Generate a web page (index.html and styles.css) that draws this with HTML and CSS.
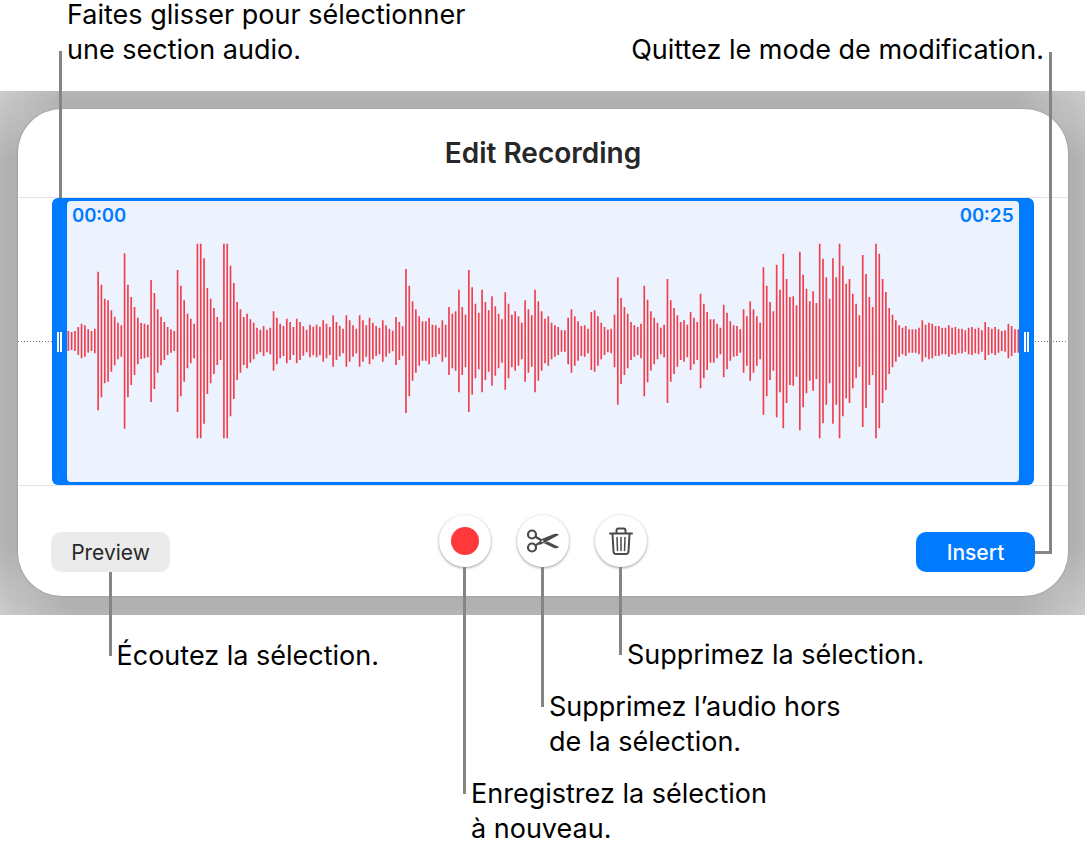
FILE: index.html
```html
<!DOCTYPE html>
<html lang="fr">
<head>
  <meta charset="utf-8">
  <title>Edit Recording</title>
  <link rel="stylesheet" href="styles.css">
</head>
<body>
  <div class="captions">
    <p>Faites glisser pour sélectionner<br>une section audio.</p>
    <p>Quittez le mode de modification.</p>
  </div>

  <main class="stage">
    <div class="editor">
      <h1>Edit Recording</h1>

      <div class="track">
        <div class="selection">
          <span class="leader-up"></span>
          <button class="handle handle-left" aria-label="Start"></button>
          <div class="times">
            <span>00:00</span>
            <span>00:25</span>
          </div>
          <svg class="wave" viewBox="0 0 2856 588" preserveAspectRatio="none">
            <path id="wave"></path>
          </svg>
          <button class="handle handle-right" aria-label="End"></button>
        </div>
      </div>

      <div class="controls">
        <div class="control side">
          <button class="btn">Preview</button>
          <p class="callout drop-preview">Écoutez la sélection.</p>
        </div>

        <div class="tools">
          <div class="control">
            <button class="round" aria-label="Record"><span class="dot"></span></button>
            <p class="callout drop-record">Enregistrez la sélection<br>à nouveau.</p>
          </div>
          <div class="control">
            <button class="round" aria-label="Crop">
              <svg width="34" height="26" viewBox="0 0 34 26">
                <g fill="none" stroke="#4a4a4a" stroke-width="2.200">
                  <circle cx="6" cy="6.500" r="4"></circle>
                  <circle cx="6" cy="19.500" r="4"></circle>
                  <path d="M9.400 8.800L15 12M9.400 17.400L15 14"></path>
                </g>
                <path fill="#4a4a4a" d="M13 15.500L14.500 11.500L28 6Q31.500 5 33 6.800L19 14.500L13.500 17Z"></path>
                <path fill="#4a4a4a" d="M18 15.300L21.500 13.500L33 19Q31.500 21 28 20Z"></path>
                <circle cx="16.500" cy="13.300" r="1" fill="#fff"></circle>
              </svg>
            </button>
            <p class="callout drop-crop">Supprimez l’audio hors<br>de la sélection.</p>
          </div>
          <div class="control">
            <button class="round" aria-label="Delete">
              <svg width="24" height="28" viewBox="0 0 24 28" fill="none" stroke="#4a4a4a" stroke-width="2" stroke-linecap="round" stroke-linejoin="round">
                <path d="M1 6.500H23"></path>
                <path d="M7.500 6V3.500Q7.500 1.500 9.500 1.500H14.500Q16.500 1.500 16.500 3.500V6"></path>
                <path d="M3.500 7L4.500 24.500Q4.700 27 7 27H17Q19.300 27 19.500 24.500L20.500 7"></path>
                <path stroke-width="1.500" d="M8 10.500L8.500 23.500M12 10.500V23.500M16 10.500L15.500 23.500"></path>
              </svg>
            </button>
            <p class="callout drop-delete">Supprimez la sélection.</p>
          </div>
        </div>

        <div class="control side end">
          <button class="btn primary">Insert</button>
          <span class="leader-exit"></span>
        </div>
      </div>
    </div>
  </main>

  <script src="wave.js"></script>
</body>
</html>
```
FILE: styles.css
```css
*, *::before {
  box-sizing: border-box;
}

body {
  margin: 0;
  background: #fff;
  color: #000;
  font-family: Inter, "Liberation Sans", sans-serif;
}

p, h1 {
  margin: 0;
}

button {
  padding: 0;
  border: 0;
  font-family: inherit;
}

.captions {
  display: flex;
  justify-content: space-between;
  align-items: flex-end;
  height: 91px;
  padding: 0 43px 24px 67px;
}

.captions p, .callout {
  font-size: 27px;
  line-height: 35px;
  white-space: nowrap;
}

.stage {
  margin-right: 2px;
  margin-bottom: 230px;
  padding: 18px 17px 19px 18px;
  background:
    radial-gradient(circle at 0 0, #c8c8c8, transparent 70px),
    radial-gradient(circle at 100% 0, #c8c8c8, transparent 70px),
    radial-gradient(circle at 0 100%, #c8c8c8, transparent 70px),
    radial-gradient(circle at 100% 100%, #c8c8c8, transparent 70px),
    #b0b0b0;
  box-shadow: inset 0 0 16px rgba(255, 255, 255, 0.15);
}

.editor {
  border-radius: 44px;
  background: #fff;
  box-shadow: 0 0 1px 1px #a6a6a6;
}

h1 {
  height: 88px;
  color: #272727;
  font-size: 28px;
  font-weight: 600;
  line-height: 88px;
  text-align: center;
}

.track {
  padding: 0 34px;
  border-top: 1px solid #e3e3e3;
  border-bottom: 1px solid #e3e3e3;
  background: linear-gradient(90deg, #777 50%, transparent 50%) 0 50% / 3px 1px repeat-x;
}

.selection {
  position: relative;
  height: 287px;
  padding: 3px 15px;
  border-radius: 6px;
  background: #007aff;
}

.times {
  display: flex;
  justify-content: space-between;
  height: 281px;
  padding: 5px;
  border-radius: 4px;
  background: #ecf3ff;
  color: #007aff;
  font-size: 19px;
  font-weight: 600;
  font-variant-numeric: tabular-nums;
  line-height: 20px;
}

.wave {
  position: absolute;
  top: 45px;
  left: 15px;
  width: calc(100% - 30px);
  height: 196px;
}

.wave path {
  fill: none;
  stroke: #f03e4d;
  stroke-width: 5;
}

.handle {
  position: absolute;
  top: 0;
  width: 15px;
  height: 100%;
  background: none;
  cursor: ew-resize;
}

.handle::before {
  content: "";
  display: block;
  width: 5px;
  height: 20px;
  margin: 0 auto;
  border: solid #fff;
  border-width: 0 2px;
}

.handle-left {
  left: 0;
}

.handle-right {
  right: 0;
}

.controls {
  display: grid;
  grid-template-columns: 1fr auto 1fr;
  align-items: start;
  padding: 29px 33px 24px;
}

.control {
  position: relative;
}

.side {
  width: 119px;
  margin-top: 17px;
}

.end {
  justify-self: end;
}

.tools {
  display: flex;
  gap: 26px;
}

.btn {
  display: block;
  width: 100%;
  height: 40px;
  border-radius: 10px;
  background: #ebebeb;
  color: #272727;
  font-size: 21px;
}

.primary {
  background: #007aff;
  color: #fff;
  font-weight: 500;
}

.round {
  display: flex;
  justify-content: center;
  align-items: center;
  width: 52px;
  height: 52px;
  border-radius: 50%;
  background: #fff;
  box-shadow: 0 1px 3px rgba(0, 0, 0, 0.4);
}

.dot {
  width: 28px;
  height: 28px;
  border-radius: 50%;
  background: #ff383c;
}

/* callouts */
.callout {
  position: absolute;
  top: 100%;
  left: 50%;
  padding-top: calc(var(--drop) - 18px);
  padding-left: 6px;
}

.callout::before {
  content: "";
  position: absolute;
  top: 0;
  left: -2px;
  width: 3px;
  height: var(--drop);
  background: #858585;
}

.drop-preview {
  --drop: 84px;
}

.drop-record {
  --drop: 227px;
}

.drop-crop {
  --drop: 140px;
}

.drop-delete {
  --drop: 88px;
}

.leader-up {
  position: absolute;
  bottom: 100%;
  left: 7px;
  width: 3px;
  height: 147px;
  background: #858585;
}

.leader-exit {
  position: absolute;
  bottom: 18px;
  left: 100%;
  width: 17px;
  height: 502px;
  border: solid #858585;
  border-width: 0 3px 3px 0;
}
```
FILE: wave.js
```js
var levels = [
  30, 27, 30, 42, 52, 47, 35, 30, 37, 208, 169, 127, 122, 92, 73, 55,
  47, 263, 169, 132, 102, 70, 54, 52, 49, 183, 144, 95, 73, 57, 42, 35,
  30, 213, 166, 122, 82, 67, 52, 292, 292, 248, 159, 127, 99, 72, 57, 292,
  292, 226, 174, 117, 95, 72, 82, 65, 55, 40, 34, 45, 34, 40, 89, 70,
  52, 45, 67, 57, 42, 67, 57, 44, 34, 49, 43, 49, 43, 62, 52, 42,
  77, 57, 46, 37, 77, 62, 47, 37, 77, 62, 47, 70, 55, 45, 40, 62,
  47, 37, 31, 72, 57, 44, 216, 166, 119, 95, 74, 59, 59, 70, 49, 47,
  40, 62, 49, 102, 82, 89, 154, 102, 79, 213, 161, 112, 85, 154, 117, 92,
  134, 104, 82, 65, 146, 112, 79, 89, 74, 55, 122, 95, 77, 154, 119, 89,
  67, 74, 55, 47, 42, 32, 32, 70, 95, 74, 59, 45, 47, 37, 87, 92,
  74, 55, 42, 34, 37, 79, 191, 129, 102, 82, 57, 47, 42, 52, 166, 124,
  89, 70, 55, 40, 49, 186, 122, 99, 77, 57, 62, 49, 87, 70, 57, 142,
  112, 87, 65, 65, 52, 40, 109, 85, 59, 47, 45, 35, 95, 74, 119, 95,
  74, 55, 221, 166, 117, 89, 229, 154, 262, 186, 132, 134, 107, 268, 199, 157,
  119, 149, 114, 292, 247, 191, 127, 248, 191, 292, 226, 172, 186, 142, 112, 77,
  258, 201, 132, 102, 292, 262, 186, 147, 99, 79, 62, 47, 40, 45, 35, 35,
  35, 40, 62, 49, 55, 52, 45, 45, 40, 40, 47, 40, 42, 37, 37, 32,
  40, 42, 37, 40, 32, 57, 42, 37, 42, 35, 30, 32, 52, 45, 35, 35
];

// one vertical bar per level, mirrored around the middle
var d = '';
for (var i = 0; i < levels.length; i++) {
  var x = 4 + i * 9.93;
  d += 'M' + x.toFixed(2) + ' ' + (294 - levels[i]) + 'v' + levels[i] * 2;
}
document.getElementById('wave').setAttribute('d', d);
```
